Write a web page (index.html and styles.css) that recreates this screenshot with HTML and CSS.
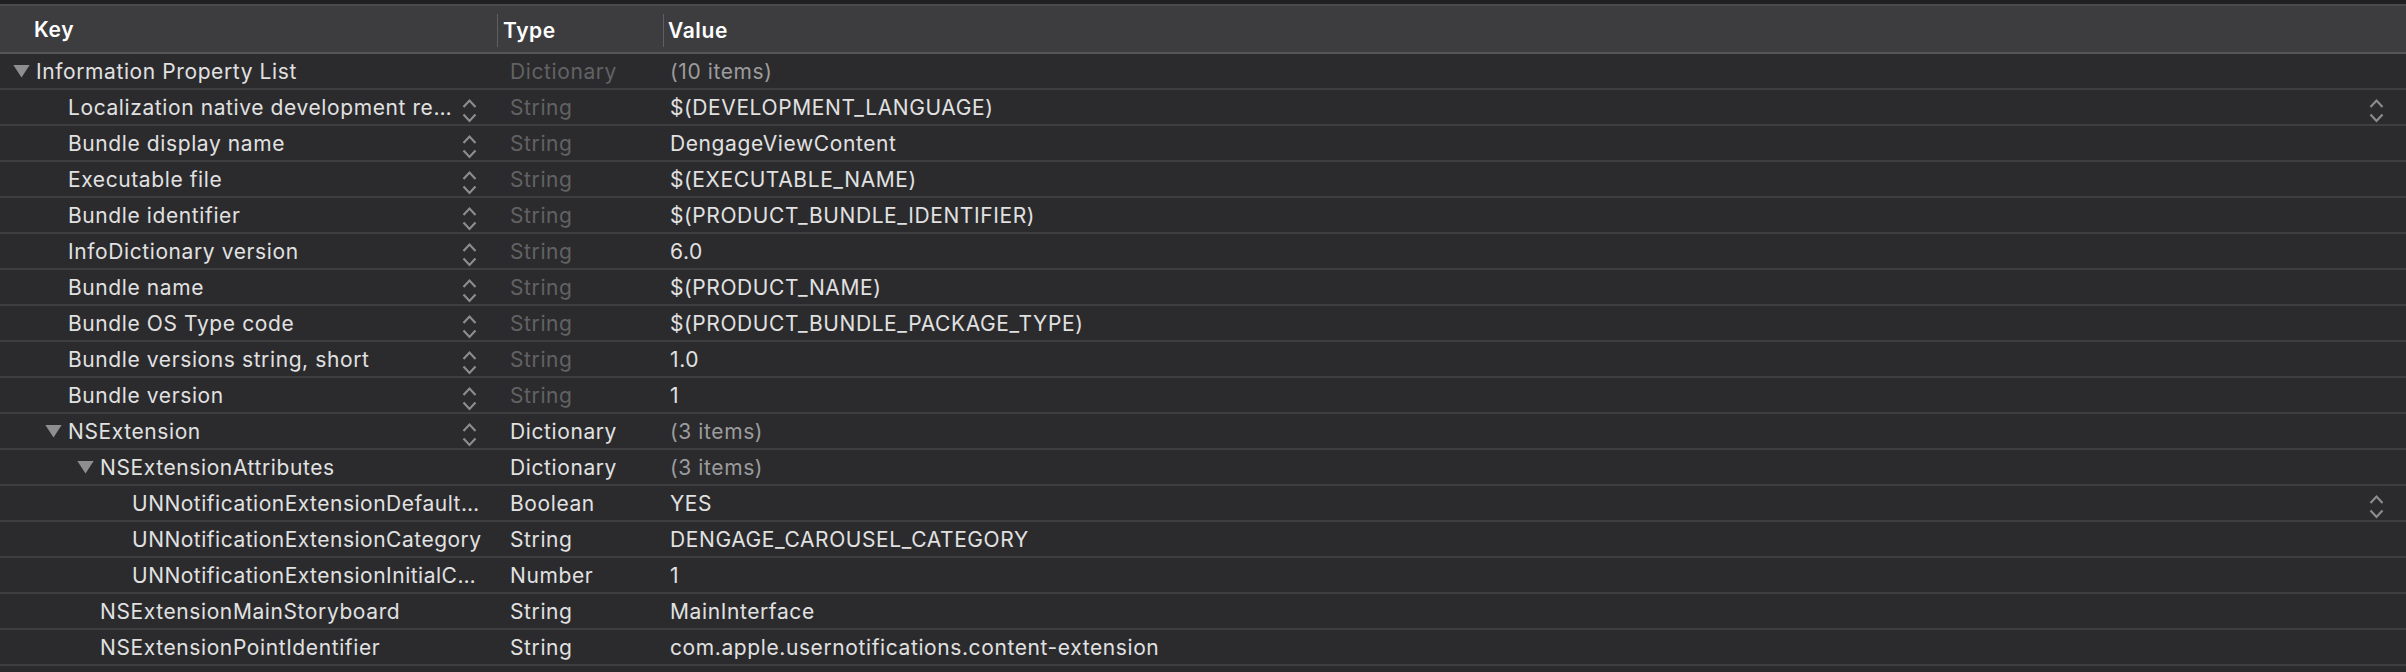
FILE: index.html
```html
<!DOCTYPE html>
<html>
<head>
<meta charset="utf-8">
<link rel="stylesheet" href="styles.css">
</head>
<body>
<div class="editor">
  <div class="topband"></div>
  <div class="header">
    <div class="hcell hkey">Key</div>
    <div class="hcell hdiv">Type</div>
    <div class="hcell hdiv hval">Value</div>
  </div>
  <div class="rows">
    <div class="row">
      <div class="key l0"><span class="disc open"></span><span class="ktext">Information Property List</span></div>
      <div class="type dim">Dictionary</div>
      <div class="val count">(10 items)</div>
    </div>
    <div class="row">
      <div class="key l1"><span class="disc"></span><span class="ktext">Localization native development re…</span><span class="step"></span></div>
      <div class="type dim">String</div>
      <div class="val"><span class="vtext">$(DEVELOPMENT_LANGUAGE)</span><span class="step"></span></div>
    </div>
    <div class="row">
      <div class="key l1"><span class="disc"></span><span class="ktext">Bundle display name</span><span class="step"></span></div>
      <div class="type dim">String</div>
      <div class="val">DengageViewContent</div>
    </div>
    <div class="row">
      <div class="key l1"><span class="disc"></span><span class="ktext">Executable file</span><span class="step"></span></div>
      <div class="type dim">String</div>
      <div class="val">$(EXECUTABLE_NAME)</div>
    </div>
    <div class="row">
      <div class="key l1"><span class="disc"></span><span class="ktext">Bundle identifier</span><span class="step"></span></div>
      <div class="type dim">String</div>
      <div class="val">$(PRODUCT_BUNDLE_IDENTIFIER)</div>
    </div>
    <div class="row">
      <div class="key l1"><span class="disc"></span><span class="ktext">InfoDictionary version</span><span class="step"></span></div>
      <div class="type dim">String</div>
      <div class="val">6.0</div>
    </div>
    <div class="row">
      <div class="key l1"><span class="disc"></span><span class="ktext">Bundle name</span><span class="step"></span></div>
      <div class="type dim">String</div>
      <div class="val">$(PRODUCT_NAME)</div>
    </div>
    <div class="row">
      <div class="key l1"><span class="disc"></span><span class="ktext">Bundle OS Type code</span><span class="step"></span></div>
      <div class="type dim">String</div>
      <div class="val">$(PRODUCT_BUNDLE_PACKAGE_TYPE)</div>
    </div>
    <div class="row">
      <div class="key l1"><span class="disc"></span><span class="ktext">Bundle versions string, short</span><span class="step"></span></div>
      <div class="type dim">String</div>
      <div class="val">1.0</div>
    </div>
    <div class="row">
      <div class="key l1"><span class="disc"></span><span class="ktext">Bundle version</span><span class="step"></span></div>
      <div class="type dim">String</div>
      <div class="val">1</div>
    </div>
    <div class="row">
      <div class="key l1"><span class="disc open"></span><span class="ktext">NSExtension</span><span class="step"></span></div>
      <div class="type">Dictionary</div>
      <div class="val count">(3 items)</div>
    </div>
    <div class="row">
      <div class="key l2"><span class="disc open"></span><span class="ktext">NSExtensionAttributes</span></div>
      <div class="type">Dictionary</div>
      <div class="val count">(3 items)</div>
    </div>
    <div class="row">
      <div class="key l3"><span class="disc"></span><span class="ktext">UNNotificationExtensionDefault…</span></div>
      <div class="type">Boolean</div>
      <div class="val"><span class="vtext">YES</span><span class="step"></span></div>
    </div>
    <div class="row">
      <div class="key l3"><span class="disc"></span><span class="ktext">UNNotificationExtensionCategory</span></div>
      <div class="type">String</div>
      <div class="val">DENGAGE_CAROUSEL_CATEGORY</div>
    </div>
    <div class="row">
      <div class="key l3"><span class="disc"></span><span class="ktext">UNNotificationExtensionInitialC…</span></div>
      <div class="type">Number</div>
      <div class="val">1</div>
    </div>
    <div class="row">
      <div class="key l2"><span class="disc"></span><span class="ktext">NSExtensionMainStoryboard</span></div>
      <div class="type">String</div>
      <div class="val">MainInterface</div>
    </div>
    <div class="row">
      <div class="key l2"><span class="disc"></span><span class="ktext">NSExtensionPointIdentifier</span></div>
      <div class="type">String</div>
      <div class="val">com.apple.usernotifications.content-extension</div>
    </div>
  </div>
</div>
</body>
</html>
```
FILE: styles.css
```css
* { box-sizing: border-box; }
html, body {
  margin: 0;
  padding: 0;
  background: #2b2b2d;
}
body {
  font-family: "Inter", "Liberation Sans", sans-serif;
  font-size: 21px;
  letter-spacing: 0.6px;
  color: #e1e1e2;
  width: 2406px;
  height: 672px;
  overflow: hidden;
}
.editor {
  display: flex;
  flex-direction: column;
}
.topband {
  height: 6px;
  background: #202022;
  border-bottom: 2px solid #4a4a4c;
}
.header {
  display: grid;
  grid-template-columns: 497px 166px 1fr;
  height: 48px;
  background: #3d3d3f;
  border-bottom: 2px solid #555557;
  align-items: center;
}
.hcell {
  font-weight: 600;
  color: #ffffff;
  display: flex;
  align-items: center;
}
.hkey { padding-left: 34px; }
.hdiv {
  height: 33px;
  border-left: 1px solid #5f5f61;
  padding-left: 5px;
  margin-top: 2px;
}
.hval { padding-left: 4px; }
.rows {
  display: flex;
  flex-direction: column;
}
.row {
  display: grid;
  grid-template-columns: 497px 166px 1fr;
  height: 36px;
  border-bottom: 2px solid #3e3e40;
  align-items: center;
}
.key {
  display: flex;
  align-items: center;
  height: 34px;
  padding-right: 4px;
  min-width: 0;
}
.key .step { margin-right: 16px; }
.l0 { padding-left: 13px; }
.l1 { padding-left: 45px; }
.l2 { padding-left: 77px; }
.l3 { padding-left: 109px; letter-spacing: 0.5px; }
.disc {
  flex: 0 0 17px;
  width: 17px;
  height: 13px;
  margin-right: 6px;
}
.disc.open {
  background: #8e8e90;
  clip-path: polygon(0 0, 100% 0, 50% 100%);
}
.ktext {
  flex: 1 1 auto;
  min-width: 0;
  white-space: nowrap;
  overflow: hidden;
  text-overflow: ellipsis;
}
.step {
  flex: 0 0 15px;
  width: 15px;
  height: 34px;
  margin-left: auto;
  background:
    url("data:image/svg+xml;utf8,<svg xmlns='http://www.w3.org/2000/svg' width='15' height='34' viewBox='0 0 15 34'><polyline points='1.5,17 7.5,10.5 13.5,17' fill='none' stroke='%238c8c8e' stroke-width='2.2'/><polyline points='1.5,24.5 7.5,31 13.5,24.5' fill='none' stroke='%238c8c8e' stroke-width='2.2'/></svg>") no-repeat;
}
.type {
  padding-left: 13px;
  white-space: nowrap;
}
.dim { color: #626264; }
.val {
  display: flex;
  align-items: center;
  height: 34px;
  padding-left: 7px;
  padding-right: 22px;
  white-space: nowrap;
}
.vtext { flex: 1 1 auto; }
.count { color: #9c9c9e; }
```
